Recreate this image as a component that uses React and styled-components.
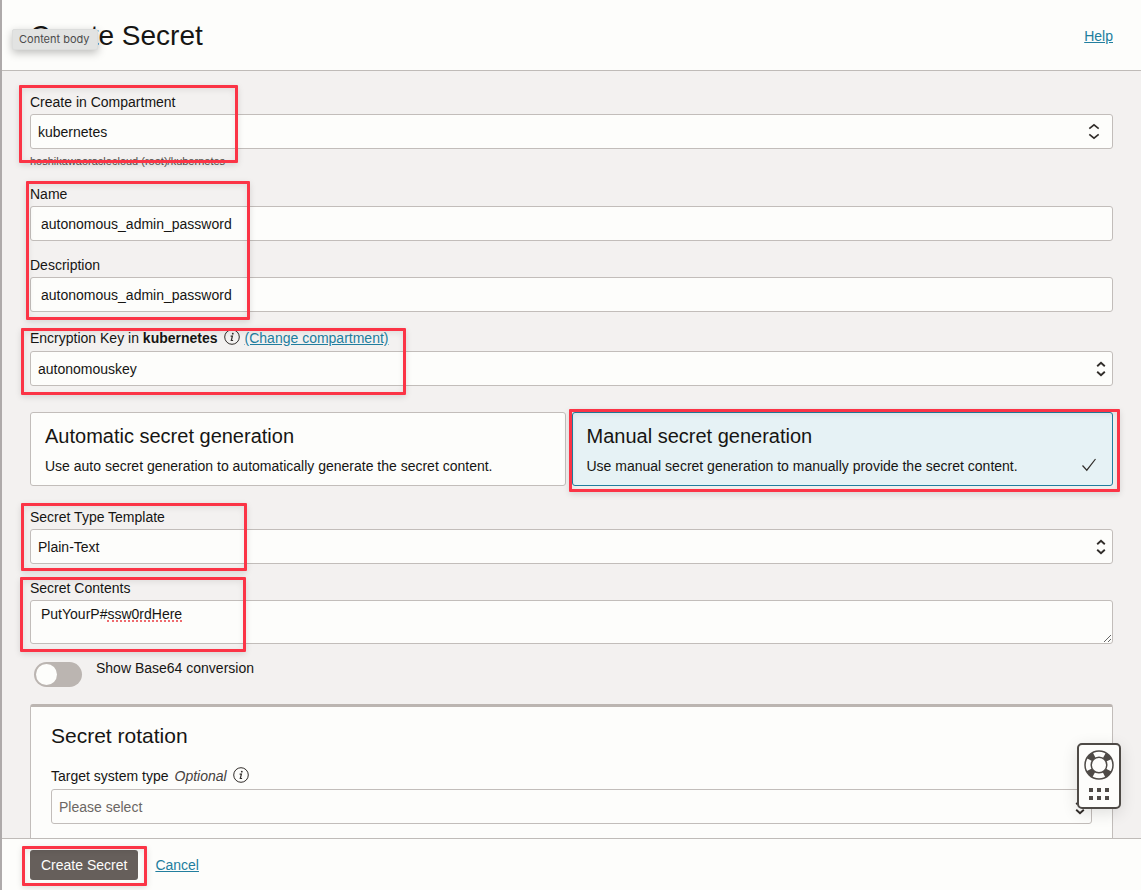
import React, { useState } from "react";
import styled, { createGlobalStyle } from "styled-components";

const GlobalStyle = createGlobalStyle`
  *, *::before, *::after {
    box-sizing: border-box;
  }

  body {
    margin: 0;
    background: #f3f1f0;
    color: #161513;
    font-family: "Liberation Sans", Arial, sans-serif;
    font-size: 14px;
    line-height: 20px;
  }

  input, select, textarea, button {
    font: inherit;
    color: inherit;
  }
`;

const Page = styled.div`
  display: flex;
  flex-direction: column;
  height: 100vh;
  border-left: 2px solid #aeaaaa;
`;

const Header = styled.header`
  display: flex;
  justify-content: space-between;
  align-items: center;
  padding: 18px 28px 16px;
  background: #fdfdfb;
  border-bottom: 1px solid #bfbbb8;
`;

const Title = styled.h1`
  margin: 0;
  font-size: 28px;
  font-weight: 400;
  line-height: 36px;
`;

const Link = styled.a`
  color: #227e9e;
  text-decoration: underline;
`;

const Tooltip = styled.div`
  position: absolute;
  top: 29px;
  left: 12px;
  padding: 1px 7px 2px 6px;
  background: #e2e3e2;
  color: #4b4b4b;
  font-family: Inter, sans-serif;
  font-size: 11px;
  line-height: 16px;
  border: 1px solid #dcdddc;
  border-radius: 2px;
  box-shadow: 0 3px 8px rgba(0, 0, 0, 0.25);
`;

const Body = styled.main`
  flex: 1;
  min-height: 0;
  overflow-y: auto;
  scrollbar-width: none;
  padding: 21px 28px 0;
`;

const Group = styled.div`
  position: relative;
  margin-bottom: ${({ $space }) => $space || 14}px;
`;

const Highlight = styled.span`
  position: absolute;
  top: ${({ $top }) => $top}px;
  left: ${({ $left }) => $left}px;
  right: ${({ $right }) => ($right === undefined ? "auto" : `${$right}px`)};
  bottom: ${({ $bottom }) => $bottom}px;
  width: ${({ $width }) => ($width ? `${$width}px` : "auto")};
  border: 3px solid #fb3446;
  border-radius: 1px;
  box-shadow: 0 2px 6px rgba(0, 0, 0, 0.12), inset 0 2px 6px rgba(0, 0, 0, 0.08);
  pointer-events: none;
  z-index: 1;
`;

const Field = styled.div`
  display: flex;
  flex-direction: column;
  gap: 2px;

  & + & {
    margin-top: 14px;
  }
`;

const LabelRow = styled.div`
  display: flex;
  align-items: flex-start;
  height: ${({ $tall }) => ($tall ? 21 : 20)}px;
`;

const Optional = styled.em`
  margin-left: 6px;
  color: #45413e;
`;

const InfoButton = styled.button`
  display: flex;
  margin: 1px 5px 0 6px;
  padding: 0;
  border: 0;
  background: none;
`;

const TextInput = styled.input`
  width: 100%;
  height: 35px;
  padding: 0 10px;
  background: #fdfdfb;
  border: 1px solid #c2bdba;
  border-radius: 3px;
`;

const SelectWrap = styled.div`
  position: relative;
`;

const Select = styled.select`
  display: block;
  width: 100%;
  height: 35px;
  padding: 0 32px 0 7px;
  appearance: none;
  background: #fdfdfb;
  color: ${({ $muted }) => ($muted ? "#6c6764" : "inherit")};
  border: 1px solid #c2bdba;
  border-radius: 3px;
`;

const SelectIcon = styled.svg`
  position: absolute;
  top: 9px;
  right: ${({ $wide }) => ($wide ? 13 : 6)}px;
  pointer-events: none;
`;

const Hint = styled.div`
  margin-top: 2px;
  color: #55504c;
  font-size: 11px;
  line-height: 16px;
`;

const Cards = styled.div`
  display: grid;
  grid-template-columns: 1fr 1fr;
  margin: 26px 0 21px;
`;

const CardCell = styled.div`
  position: relative;
  padding-right: ${({ $gutter }) => $gutter || 0}px;
`;

const Card = styled.label`
  display: grid;
  grid-template-columns: 1fr auto;
  align-items: center;
  row-gap: 7px;
  height: 74px;
  padding: 10px 15px 8px 14px;
  align-content: start;
  background: ${({ $selected }) => ($selected ? "#e6f2f5" : "#fdfdfb")};
  border: 1px solid ${({ $selected }) => ($selected ? "#227e9e" : "#c2bdba")};
  border-radius: 3px;
`;

const CardTitle = styled.span`
  grid-column: 1 / -1;
  font-size: 20px;
  line-height: 26px;
`;

const HiddenInput = styled.input`
  position: absolute;
  opacity: 0;
`;

const TextArea = styled.textarea`
  display: block;
  width: 100%;
  height: 44px;
  padding: 3px 10px;
  background: #fdfdfb;
  border: 1px solid #c2bdba;
  border-radius: 3px;
  resize: vertical;
`;

const Squiggle = styled.span`
  position: absolute;
  top: 20px;
  left: 77px;
  width: 75px;
  border-top: 2px dotted #ee6a6e;
`;

const ToggleRow = styled.label`
  display: flex;
  align-items: flex-start;
  gap: 14px;
  padding-left: 4px;
`;

const Switch = styled.input`
  flex: none;
  width: 48px;
  height: 25px;
  margin: 4px 0 0;
  padding: 2px;
  appearance: none;
  background: #bbb5b1;
  border-radius: 13px;

  &::before {
    content: "";
    display: block;
    width: 21px;
    height: 21px;
    background: #fdfdfb;
    border-radius: 50%;
  }

  &:checked::before {
    margin-left: auto;
  }
`;

const Panel = styled.section`
  min-height: 180px;
  margin-top: 17px;
  padding: 15px 20px;
  background: #fdfdfb;
  border: 1px solid #c2bdba;
  border-top: 3px solid #bbb5b1;
  border-radius: 3px;
`;

const PanelTitle = styled.h2`
  margin: 0 0 16px;
  font-size: 21px;
  font-weight: 400;
  line-height: 28px;
`;

const Footer = styled.footer`
  display: flex;
  align-items: center;
  gap: 17px;
  padding: 11px 28px 10px;
  background: #fdfdfb;
  border-top: 1px solid #bfbbb8;
`;

const SubmitWrap = styled.div`
  position: relative;
`;

const SubmitButton = styled.button`
  display: block;
  height: 30px;
  padding: 0 11px;
  background: #665f5b;
  color: #fdfdfb;
  border: 0;
  border-radius: 3px;
`;

const HelpWidget = styled.button`
  position: fixed;
  right: 20px;
  bottom: 81px;
  display: flex;
  flex-direction: column;
  align-items: center;
  gap: 8px;
  width: 44px;
  height: 66px;
  padding: 5px 0;
  background: #fdfdfb;
  border: 2px solid #4e4a46;
  border-radius: 5px;
  box-shadow: 0 4px 16px rgba(0, 0, 0, 0.12);
  z-index: 2;
`;

const Info = () => (
  <InfoButton type="button" aria-label="More information">
    <svg width="16" height="16" viewBox="0 0 16 16" fill="none" stroke="#312d2a">
      <circle cx="8" cy="8" r="7.3" />
      <circle cx="8.8" cy="4.7" r="0.9" fill="#312d2a" stroke="none" />
      <path d="M6.6 7.2h1.8L7.3 11.5h1.8" strokeWidth="1.2" />
    </svg>
  </InfoButton>
);

const SelectBox = ({ id, options, wide, muted }) => (
  <SelectWrap>
    <Select id={id} $muted={muted}>
      {options.map((option) => (
        <option key={option}>{option}</option>
      ))}
    </Select>
    <SelectIcon
      $wide={wide}
      width="12"
      height="18"
      viewBox="0 0 12 18"
      fill="none"
      stroke="#312d2a"
      strokeWidth={wide ? 1.7 : 1.9}
    >
      <path
        d={wide ? "M1.3 5.6 6 1.9l4.7 3.7M1.3 11.4 6 15.1l4.7-3.7" : "M2.2 6.2 6 2.8l3.8 3.4M2.2 11.8 6 15.2l3.8-3.4"}
      />
    </SelectIcon>
  </SelectWrap>
);

const Lifebuoy = () => (
  <svg width="30" height="30" viewBox="0 0 30 30" fill="none" stroke="#4e4a46">
    <circle cx="15" cy="15" r="11" strokeWidth="6" strokeDasharray="6.6 10.68" strokeDashoffset="-5.34" />
    <circle cx="15" cy="15" r="14" strokeWidth="1.5" />
    <circle cx="15" cy="15" r="7.8" strokeWidth="1.5" />
  </svg>
);

const Dots = () => (
  <svg width="22" height="12" viewBox="0 0 22 12" fill="#4e4a46">
    {[1, 9, 17].map((x) => (
      <React.Fragment key={x}>
        <rect x={x} y="0" width="4" height="4" />
        <rect x={x} y="8" width="4" height="4" />
      </React.Fragment>
    ))}
  </svg>
);

const App = () => {
  const [mode, setMode] = useState("manual");

  return (
    <>
      <GlobalStyle />
      <Page>
        <Header>
          <Title>Create Secret</Title>
          <Link href="#help">Help</Link>
          <Tooltip role="tooltip">Content body</Tooltip>
        </Header>
        <Body>
          <Group $space={15}>
            <Highlight $top={-7} $left={-11} $bottom={6} $width={219} />
            <Field>
              <LabelRow>
                <label htmlFor="compartment">Create in Compartment</label>
              </LabelRow>
              <SelectBox id="compartment" options={["kubernetes"]} wide />
              <Hint>hoshikawaoraclecloud (root)/kubernetes</Hint>
            </Field>
          </Group>
          <Group $space={16}>
            <Highlight $top={-3} $left={-4} $bottom={-8} $width={224} />
            <Field>
              <LabelRow>
                <label htmlFor="name">Name</label>
              </LabelRow>
              <TextInput id="name" defaultValue="autonomous_admin_password" />
            </Field>
            <Field>
              <LabelRow>
                <label htmlFor="description">Description</label>
              </LabelRow>
              <TextInput id="description" defaultValue="autonomous_admin_password" />
            </Field>
          </Group>
          <Group>
            <Highlight $top={0} $left={-9} $bottom={-9} $width={385} />
            <Field>
              <LabelRow $tall>
                <label htmlFor="key">
                  Encryption Key in <b>kubernetes</b>
                </label>
                <Info />
                <Link href="#compartment">(Change compartment)</Link>
              </LabelRow>
              <SelectBox id="key" options={["autonomouskey"]} />
            </Field>
          </Group>
          <Cards>
            <CardCell $gutter={6}>
              <Card $selected={mode === "auto"}>
                <HiddenInput
                  type="radio"
                  name="mode"
                  checked={mode === "auto"}
                  onChange={() => setMode("auto")}
                />
                <CardTitle>Automatic secret generation</CardTitle>
                <span>Use auto secret generation to automatically generate the secret content.</span>
              </Card>
            </CardCell>
            <CardCell>
              <Highlight $top={-3} $left={-3} $right={-7} $bottom={-6} />
              <Card $selected={mode === "manual"}>
                <HiddenInput
                  type="radio"
                  name="mode"
                  checked={mode === "manual"}
                  onChange={() => setMode("manual")}
                />
                <CardTitle>Manual secret generation</CardTitle>
                <span>Use manual secret generation to manually provide the secret content.</span>
                <svg width="16" height="16" viewBox="0 0 16 16" fill="none" stroke="#312d2a" strokeWidth="1.2">
                  <path d="M1.5 7.5 5.8 12.2 14.5 1" />
                </svg>
              </Card>
            </CardCell>
          </Cards>
          <Group>
            <Highlight $top={-4} $left={-9} $bottom={-7} $width={226} />
            <Field>
              <LabelRow>
                <label htmlFor="template">Secret Type Template</label>
              </LabelRow>
              <SelectBox id="template" options={["Plain-Text"]} />
            </Field>
          </Group>
          <Group>
            <Highlight $top={-1} $left={-10} $bottom={-8} $width={226} />
            <Field>
              <LabelRow>
                <label htmlFor="contents">Secret Contents</label>
              </LabelRow>
              <SelectWrap>
                <TextArea id="contents" spellCheck="false" defaultValue="PutYourP#ssw0rdHere" />
                <Squiggle />
              </SelectWrap>
            </Field>
          </Group>
          <ToggleRow>
            <Switch type="checkbox" role="switch" />
            Show Base64 conversion
          </ToggleRow>
          <Panel>
            <PanelTitle>Secret rotation</PanelTitle>
            <Field>
              <LabelRow $tall>
                <label htmlFor="target">
                  Target system type<Optional>Optional</Optional>
                </label>
                <Info />
              </LabelRow>
              <SelectBox id="target" options={["Please select"]} muted />
            </Field>
          </Panel>
        </Body>
        <Footer>
          <SubmitWrap>
            <Highlight $top={-4} $left={-8} $right={-9} $bottom={-6} />
            <SubmitButton type="button">Create Secret</SubmitButton>
          </SubmitWrap>
          <Link href="#cancel">Cancel</Link>
        </Footer>
        <HelpWidget type="button" aria-label="Support">
          <Lifebuoy />
          <Dots />
        </HelpWidget>
      </Page>
    </>
  );
};

export default App;
